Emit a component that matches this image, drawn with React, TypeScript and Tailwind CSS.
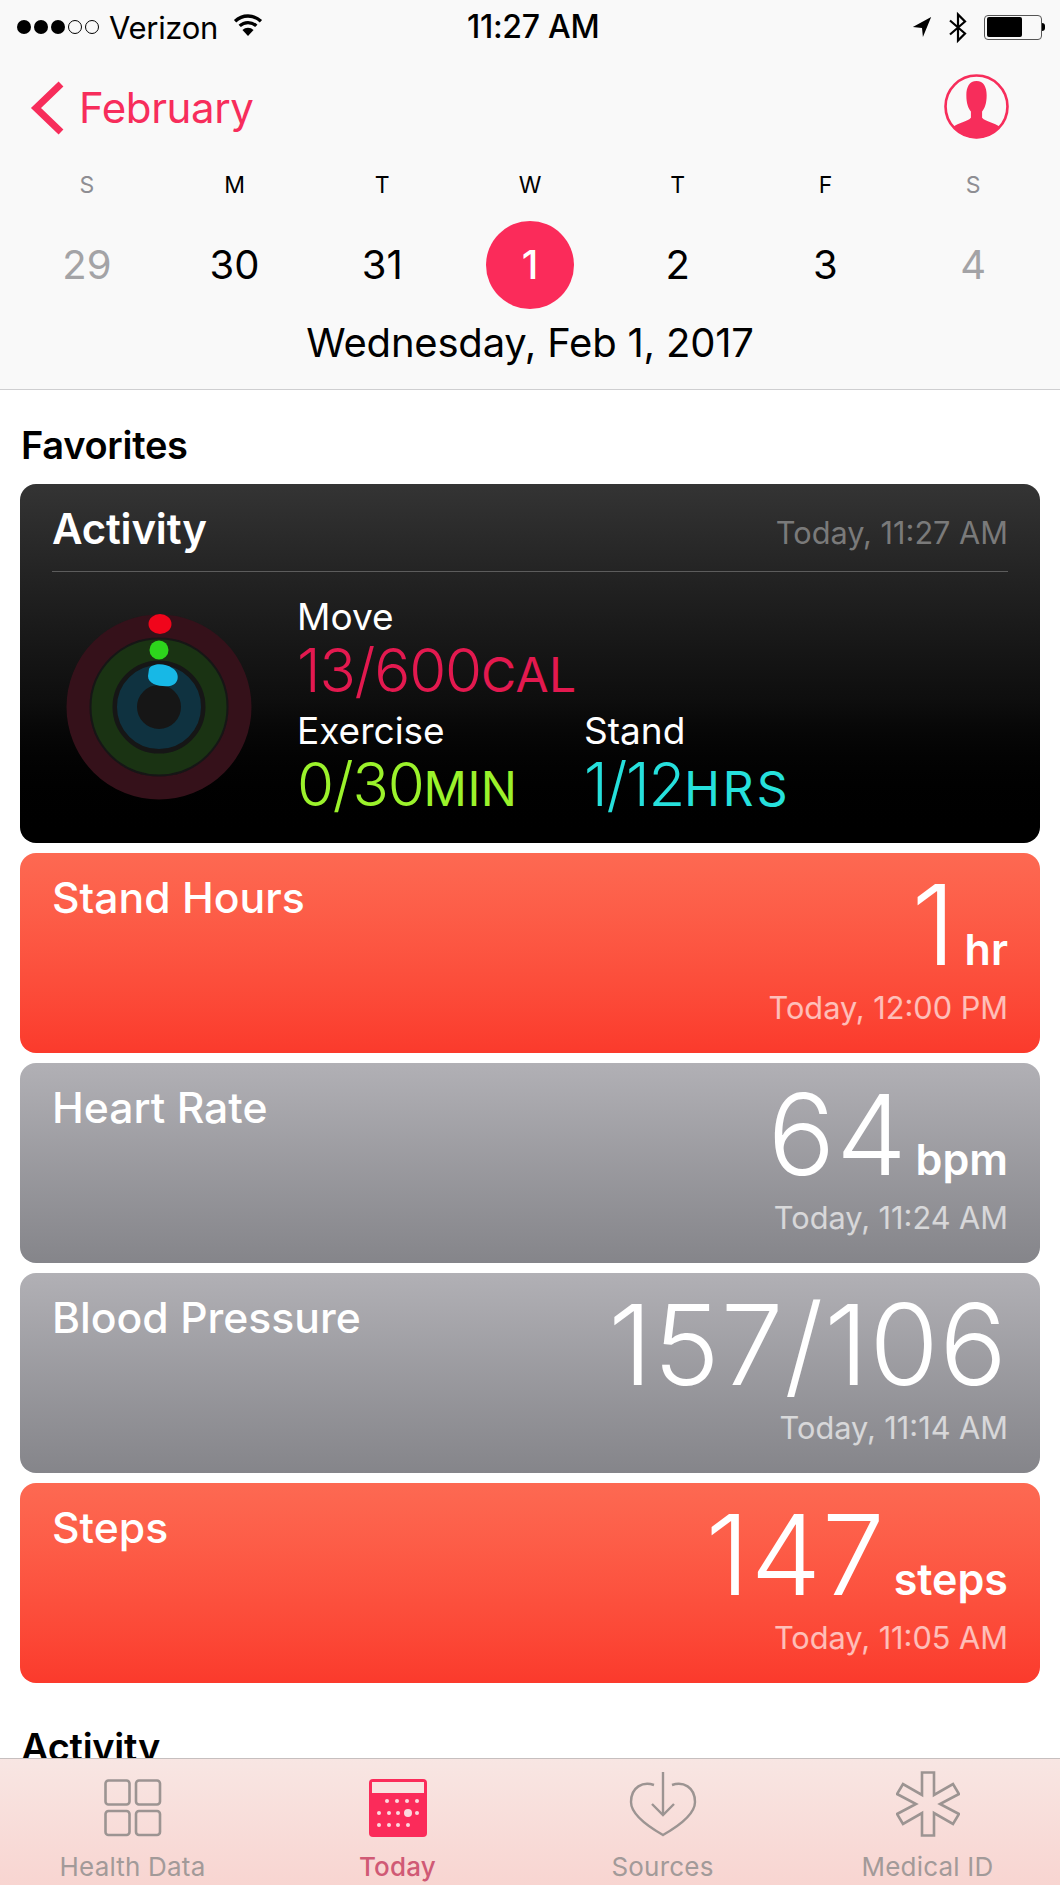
import React from "react";

const font = { fontFamily: "Inter, 'Liberation Sans', sans-serif" };

function StatusBar() {
  return (
    <div className="relative flex h-[54px] items-center justify-between pl-[17px] pr-[15px] text-black">
      <div className="flex items-center">
        <div className="flex items-center gap-[3px]">
          <span className="h-[14px] w-[14px] rounded-full bg-black" />
          <span className="h-[14px] w-[14px] rounded-full bg-black" />
          <span className="h-[14px] w-[14px] rounded-full bg-black" />
          <span className="h-[14px] w-[14px] rounded-full border border-black" />
          <span className="h-[14px] w-[14px] rounded-full border border-black" />
        </div>
        <span className="ml-[10px] text-[31px] leading-none tracking-[-0.3px]">Verizon</span>
        <svg className="ml-[15px] -mt-[4px]" width="30" height="24" viewBox="0 0 32 26">
          <path d="M2 9 A20 20 0 0 1 30 9" fill="none" stroke="black" strokeWidth="3.6" />
          <path d="M7 14 A13 13 0 0 1 25 14" fill="none" stroke="black" strokeWidth="3.6" />
          <path d="M16 25 L10 18.5 A8.5 8.5 0 0 1 22 18.5 Z" fill="black" />
        </svg>
      </div>
      <span className="absolute left-[467px] top-[9px] text-[32px] font-medium leading-[36px] tracking-[-0.3px]">11:27 AM</span>
      <div className="flex items-center">
        <svg width="22" height="22" viewBox="0 0 22 24">
          <path d="M21 1 L1 12 L11 13 L12 23 Z" fill="black" />
        </svg>
        <svg className="ml-[15px]" width="20" height="35" viewBox="0 0 20 32">
          <path d="M2 9 L17 22 L10 29 L10 3 L17 10 L2 23" fill="none" stroke="black" strokeWidth="2.2" />
        </svg>
        <div className="ml-[16px] flex items-center">
          <div className="flex h-[25px] w-[58px] items-stretch rounded-[4px] border-[1.5px] border-[#555] p-[1.5px]">
            <div className="w-[35px] rounded-[2px] bg-black" />
          </div>
          <div className="h-[8px] w-[3px] rounded-r-full bg-black" />
        </div>
      </div>
    </div>
  );
}

function Header() {
  const days = [
    ["S", "29", "muted"],
    ["M", "30", ""],
    ["T", "31", ""],
    ["W", "1", "today"],
    ["T", "2", ""],
    ["F", "3", ""],
    ["S", "4", "muted"],
  ];
  return (
    <header className="h-[390px] shrink-0 border-b border-[#cfcfd1] bg-[#f9f9f9]">
      <StatusBar />
      <div className="flex h-[108px] items-center justify-between pl-[30px] pr-[51px]">
        <div className="flex items-center text-[#f72d5b]">
          <svg width="36" height="54" viewBox="0 0 36 54">
            <path d="M31 3 L6 27 L31 51" fill="none" stroke="#f72d5b" strokeWidth="7" />
          </svg>
          <span className="ml-[13px] text-[42px] leading-none tracking-[-0.4px]">February</span>
        </div>
        <svg className="-mt-[4px]" width="65" height="65" viewBox="0 0 64 64">
          <circle cx="32" cy="32" r="30.5" fill="#f9f9f9" stroke="#f72d5b" strokeWidth="2.6" />
          <path d="M32 7 C25 7 22 13 22 21 C22 29 24 34 26.5 37 L26.5 43 C23 47 14 48 9 52 A29 29 0 0 0 55 52 C50 48 41 47 37.5 43 L37.5 37 C40 34 42 29 42 21 C42 13 39 7 32 7 Z" fill="#f72d5b" />
        </svg>
      </div>
      <div className="mt-[11px] grid grid-cols-7 px-[13px]">
        {days.map(([d, n, kind], i) => (
          <div key={i} className="flex flex-col items-center">
            <div className={`h-[24px] text-[23px] leading-[24px] ${kind === "muted" ? "text-[#8e8e93]" : "text-black"}`}>{d}</div>
            <div
              className={`mt-[24px] flex h-[88px] w-[88px] items-center justify-center rounded-full text-[40px] leading-none ${
                kind === "today"
                  ? "bg-[#fb2b5a] font-medium text-white"
                  : kind === "muted"
                    ? "text-[#a3a3a6]"
                    : "text-black"
              }`}
            >
              {n}
            </div>
          </div>
        ))}
      </div>
      <div className="mt-[9px] text-center text-[40px] leading-[50px] tracking-[-0.2px] text-black">Wednesday, Feb 1, 2017</div>
    </header>
  );
}

function Rings() {
  return (
    <svg width="190" height="190" viewBox="0 0 190 190">
      <circle cx="95" cy="95" r="70" fill="#161616" />
      <circle cx="95" cy="95" r="81" fill="none" stroke="#35111a" strokeWidth="23" />
      <circle cx="95" cy="95" r="57" fill="none" stroke="#1a3313" strokeWidth="21" />
      <circle cx="95" cy="95" r="32" fill="none" stroke="#0f3240" strokeWidth="20" />
      <ellipse cx="96" cy="12" rx="11.5" ry="10" fill="#f0051b" />
      <circle cx="95" cy="38" r="9.5" fill="#2dd61c" />
      <path d="M85 57 C88 51 101 51 108 56 C116 60 116 72 106 74 C97 75 84 73 84 64 Z" fill="#17b8e6" />
    </svg>
  );
}

function Metric({ label, value, unit, color, unitClass, className }: { label: string; value: string; unit: string; color: string; unitClass?: string; className?: string }) {
  return (
    <div className={className}>
      <div className="text-[37px] leading-[40px] text-white">{label}</div>
      <div className={`flex items-baseline leading-[66px] ${color}`}>
        <span className="text-[60px] font-[350] tracking-[-1.2px]">{value}</span>
        <span className={`text-[48px] font-normal ${unitClass ?? "tracking-[0.5px]"}`}>{unit}</span>
      </div>
    </div>
  );
}

function ActivityCard() {
  return (
    <section className="h-[359px] rounded-[16px] bg-gradient-to-b from-[#343434] via-[#0e0e0e] via-[60%] to-black px-[32px]">
      <div className="flex h-[88px] items-center justify-between border-b border-[#5c5c5c]">
        <span className="mt-[2px] text-[42px] font-semibold leading-none tracking-[-0.2px] text-white">Activity</span>
        <span className="mt-[12px] text-[30.7px] leading-none text-[#7a7a7a]">Today, 11:27 AM</span>
      </div>
      <div className="flex">
        <div className="ml-[12px] mt-[40px] h-[190px] w-[190px] shrink-0"><Rings /></div>
        <div className="ml-[43px] mt-[25px] flex flex-col">
          <Metric label="Move" value="13/600" unit="CAL" color="text-[#e3194f]" />
          <div className="mt-[3px] flex">
            <Metric label="Exercise" value="0/30" unit="MIN" color="text-[#9bf22b]" className="w-[287px]" />
            <Metric label="Stand" value="1/12" unit="HRS" color="text-[#26e0dc]" unitClass="tracking-[3px]" />
          </div>
        </div>
      </div>
    </section>
  );
}

function StatCard({ title, value, unit, time, tone }: { title: string; value: string; unit?: string; time: string; tone: "red" | "gray" }) {
  const bg = tone === "red" ? "bg-gradient-to-b from-[#fd6952] to-[#fb3a2c]" : "bg-gradient-to-b from-[#b1b0b5] to-[#85858a]";
  return (
    <section className={`relative flex h-[200px] justify-between rounded-[16px] pl-[32px] pr-[32px] text-white ${bg}`}>
      <div className="pt-[22px] text-[42.7px] font-medium leading-[46px]">{title}</div>
      <div className="flex flex-col items-end">
        <div className="mt-[12px] flex h-[116px] items-baseline">
          <span className="text-[112px] font-light leading-[118px] tracking-[1px]">{value}</span>
          {unit ? <span className="ml-[8px] text-[43px] font-semibold leading-none">{unit}</span> : null}
        </div>
        <div className="mt-[9px] text-[30.7px] leading-[36px] text-white/65">{time}</div>
      </div>
    </section>
  );
}

function TabItem({ label, active, children }: { label: string; active?: boolean; children: React.ReactNode }) {
  return (
    <div className="flex flex-col items-center">
      <div className="flex h-[78px] items-end">{children}</div>
      <div className={`mt-[15px] text-[26px] leading-[30px] tracking-[0.2px] ${active ? "font-medium text-[#d05a75]" : "text-[#a29a99]"}`}>{label}</div>
    </div>
  );
}

function TabBar() {
  return (
    <nav className="grid h-[127px] shrink-0 grid-cols-4 border-t border-[#c6bfbf] bg-gradient-to-b from-[#f8e6e3] to-[#f8d5d1]">
      <TabItem label="Health Data">
        <svg width="58" height="58" viewBox="0 0 58 58" fill="none" stroke="#9c9492" strokeWidth="2.6">
          <rect x="1.5" y="1.5" width="24" height="24" rx="3" />
          <rect x="32" y="1.5" width="24" height="24" rx="3" />
          <rect x="1.5" y="32" width="24" height="24" rx="3" />
          <rect x="32" y="32" width="24" height="24" rx="3" />
        </svg>
      </TabItem>
      <TabItem label="Today" active>
        <svg width="58" height="58" viewBox="0 0 58 58">
          <rect x="0" y="0" width="58" height="58" rx="4" fill="#fb2b5a" />
          <rect x="3" y="3" width="52" height="11" fill="#f9e3e1" />
          {[18, 28, 38, 48].map((x) => <circle key={x} cx={x} cy="22" r="2" fill="#fbd9de" />)}
          {[10, 20, 29, 48].map((x) => <circle key={x} cx={x} cy="34" r="2" fill="#fbd9de" />)}
          <circle cx="39" cy="34" r="4" fill="#fbd9de" />
          {[10, 20, 29, 39].map((x) => <circle key={x} cx={x} cy="46" r="2" fill="#fbd9de" />)}
        </svg>
      </TabItem>
      <TabItem label="Sources">
        <svg width="68" height="66" viewBox="0 0 68 66" fill="none" stroke="#9c9492" strokeWidth="2.4">
          <path d="M25 14 C14 10 2 16 2 31 C2 44 20 56 34 64 C48 56 66 44 66 31 C66 16 54 10 43 14" />
          <path d="M34 1 L34 44" />
          <path d="M23 33 L34 44 L45 33" />
        </svg>
      </TabItem>
      <TabItem label="Medical ID">
        <svg width="64" height="66" viewBox="0 0 64 66" fill="none" stroke="#9c9492" strokeWidth="2.6">
          <path d="M26 1.5 H38 V24 L57 13 L63 23 L44 33 L63 43 L57 53 L38 42 V64.5 H26 V42 L7 53 L1 43 L20 33 L1 23 L7 13 L26 24 Z" />
        </svg>
      </TabItem>
    </nav>
  );
}

export default function App() {
  return (
    <div className="flex h-[1885px] w-[1060px] flex-col overflow-hidden bg-white" style={font}>
      <Header />
      <main className="min-h-0 flex-1 overflow-hidden px-[20px]">
        <h2 className="pl-[1px] pt-[31px] text-[38px] font-semibold leading-[48px] tracking-[-0.3px] text-black">Favorites</h2>
        <div className="mt-[15px] flex flex-col gap-[10px]">
          <ActivityCard />
          <StatCard title="Stand Hours" value="1" unit="hr" time="Today, 12:00 PM" tone="red" />
          <StatCard title="Heart Rate" value="64" unit="bpm" time="Today, 11:24 AM" tone="gray" />
          <StatCard title="Blood Pressure" value="157/106" time="Today, 11:14 AM" tone="gray" />
          <StatCard title="Steps" value="147" unit="steps" time="Today, 11:05 AM" tone="red" />
        </div>
        <h2 className="mt-[40px] pl-[1px] text-[38px] font-semibold leading-[48px] tracking-[-0.3px] text-black">Activity</h2>
      </main>
      <TabBar />
    </div>
  );
}
